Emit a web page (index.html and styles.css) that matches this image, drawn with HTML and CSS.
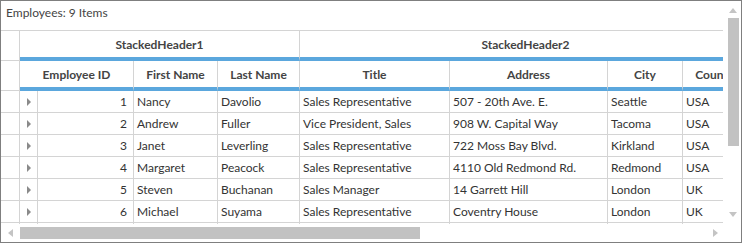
FILE: index.html
```html
<!doctype html>
<html>
<head>
  <meta charset="utf-8">
  <title>Employees</title>
  <link rel="stylesheet" href="styles.css">
</head>
<body>

  <div class="grid">
    <div class="main">
      <div class="caption">Employees: 9 Items</div>
      <div class="viewport">
        <div class="row stacked">
          <div class="cell rowhead"></div>
          <div class="cell hd w-sh1">StackedHeader1</div>
          <div class="cell hd w-sh2">StackedHeader2</div>
        </div>
        <div class="row headers">
          <div class="cell rowhead"></div>
          <div class="cell hd w-idx">Employee ID</div>
          <div class="cell hd w-first">First Name</div>
          <div class="cell hd w-last">Last Name</div>
          <div class="cell hd w-title">Title</div>
          <div class="cell hd w-addr">Address</div>
          <div class="cell hd w-city">City</div>
          <div class="cell hd w-country">Country</div>
        </div>

        <div class="row data">
          <div class="cell rowhead"></div>
          <div class="cell w-exp"><span class="expander"></span></div>
          <div class="cell num w-id">1</div>
          <div class="cell w-first">Nancy</div>
          <div class="cell w-last">Davolio</div>
          <div class="cell w-title">Sales Representative</div>
          <div class="cell w-addr">507 - 20th Ave. E.</div>
          <div class="cell w-city">Seattle</div>
          <div class="cell w-country">USA</div>
        </div>
        <div class="row data">
          <div class="cell rowhead"></div>
          <div class="cell w-exp"><span class="expander"></span></div>
          <div class="cell num w-id">2</div>
          <div class="cell w-first">Andrew</div>
          <div class="cell w-last">Fuller</div>
          <div class="cell w-title">Vice President, Sales</div>
          <div class="cell w-addr">908 W. Capital Way</div>
          <div class="cell w-city">Tacoma</div>
          <div class="cell w-country">USA</div>
        </div>
        <div class="row data">
          <div class="cell rowhead"></div>
          <div class="cell w-exp"><span class="expander"></span></div>
          <div class="cell num w-id">3</div>
          <div class="cell w-first">Janet</div>
          <div class="cell w-last">Leverling</div>
          <div class="cell w-title">Sales Representative</div>
          <div class="cell w-addr">722 Moss Bay Blvd.</div>
          <div class="cell w-city">Kirkland</div>
          <div class="cell w-country">USA</div>
        </div>
        <div class="row data">
          <div class="cell rowhead"></div>
          <div class="cell w-exp"><span class="expander"></span></div>
          <div class="cell num w-id">4</div>
          <div class="cell w-first">Margaret</div>
          <div class="cell w-last">Peacock</div>
          <div class="cell w-title">Sales Representative</div>
          <div class="cell w-addr">4110 Old Redmond Rd.</div>
          <div class="cell w-city">Redmond</div>
          <div class="cell w-country">USA</div>
        </div>
        <div class="row data">
          <div class="cell rowhead"></div>
          <div class="cell w-exp"><span class="expander"></span></div>
          <div class="cell num w-id">5</div>
          <div class="cell w-first">Steven</div>
          <div class="cell w-last">Buchanan</div>
          <div class="cell w-title">Sales Manager</div>
          <div class="cell w-addr">14 Garrett Hill</div>
          <div class="cell w-city">London</div>
          <div class="cell w-country">UK</div>
        </div>
        <div class="row data">
          <div class="cell rowhead"></div>
          <div class="cell w-exp"><span class="expander"></span></div>
          <div class="cell num w-id">6</div>
          <div class="cell w-first">Michael</div>
          <div class="cell w-last">Suyama</div>
          <div class="cell w-title">Sales Representative</div>
          <div class="cell w-addr">Coventry House</div>
          <div class="cell w-city">London</div>
          <div class="cell w-country">UK</div>
        </div>
        <!-- next row only peeks in under the last one -->
        <div class="row data">
          <div class="cell rowhead"></div>
          <div class="cell w-exp"></div>
          <div class="cell w-id"></div>
          <div class="cell w-first"></div>
          <div class="cell w-last"></div>
          <div class="cell w-title"></div>
          <div class="cell w-addr"></div>
          <div class="cell w-city"></div>
          <div class="cell w-country"></div>
        </div>
      </div>
    </div>

    <div class="vscroll">
      <span class="arrow up"></span>
      <div class="vthumb"></div>
      <span class="arrow down"></span>
    </div>

    <div class="hscroll">
      <span class="arrow left"></span>
      <div class="hthumb"></div>
      <span class="arrow right"></span>
    </div>
    <div class="corner"></div>
  </div>

</body>
</html>
```

FILE: styles.css
```css
body {
  margin: 0;
  background: #fff;
}

.grid {
  box-sizing: border-box;
  width: 742px;
  height: 243px;
  border: 1px solid #7f7f7f;
  display: grid;
  grid-template-columns: 722px 17px;
  grid-template-rows: 223px 17px;
  font-family: "Lato", "Liberation Sans", sans-serif;
  font-size: 12px;
  color: #333;
  background: #fff;
}

.main {
  overflow: hidden;
}

.caption {
  box-sizing: border-box;
  height: 30px;
  padding: 4px 0 0 5px;
  border-bottom: 1px solid #d4d4d4;
  color: #444;
}

.viewport {
  width: 722px;
  height: 193px;
  overflow: hidden;
}

.row {
  display: flex;
  width: max-content;
}

.cell {
  box-sizing: border-box;
  flex: none;
  display: flex;
  align-items: center;
  border-right: 1px solid #d4d4d4;
  border-bottom: 1px solid #d4d4d4;
  padding: 0 3px;
  white-space: nowrap;
  overflow: hidden;
}

.stacked .cell,
.headers .cell {
  height: 30px;
}

.hd {
  justify-content: center;
  font-weight: bold;
  color: #444;
  border-bottom: 4px solid #5ba7dd;
}

.rowhead {
  width: 19px;
}

.stacked .rowhead,
.headers .rowhead {
  border-bottom: 1px solid #d4d4d4;
}

.data .cell {
  height: 22px;
}

.num {
  justify-content: flex-end;
  padding-right: 6px;
}

.w-sh1 { width: 280px; }
.w-sh2 { width: 452px; }
.w-idx { width: 114px; }
.w-exp { width: 18px; padding: 0; justify-content: center; }
.w-id { width: 96px; }
.w-first { width: 84px; }
.w-last { width: 82px; }
.w-title { width: 150px; }
.w-addr { width: 158px; }
.w-city { width: 75px; }
.w-country { width: 69px; }

.expander {
  width: 0;
  height: 0;
  border-top: 4px solid transparent;
  border-bottom: 4px solid transparent;
  border-left: 4px solid #8a8a8a;
}

/* scrollbars */
.vscroll {
  grid-row: 1;
  grid-column: 2;
  display: flex;
  flex-direction: column;
  align-items: center;
  padding: 7px 0 0 3px;
}

.vthumb {
  width: 11px;
  height: 128px;
  margin-top: 5px;
  margin-bottom: 66px;
  background: #c2c2c2;
}

.hscroll {
  grid-row: 2;
  grid-column: 1;
  display: flex;
  align-items: center;
  padding-left: 7px;
}

.hthumb {
  width: 400px;
  height: 12px;
  margin-left: 7px;
  margin-right: 293px;
  background: #c2c2c2;
}

.arrow {
  width: 0;
  height: 0;
}

.arrow.up {
  border-left: 4px solid transparent;
  border-right: 4px solid transparent;
  border-bottom: 5px solid #c4c4c4;
}

.arrow.down {
  border-left: 4px solid transparent;
  border-right: 4px solid transparent;
  border-top: 5px solid #c4c4c4;
}

.arrow.left {
  border-top: 4px solid transparent;
  border-bottom: 4px solid transparent;
  border-right: 5px solid #c4c4c4;
}

.arrow.right {
  border-top: 4px solid transparent;
  border-bottom: 4px solid transparent;
  border-left: 5px solid #c4c4c4;
}
```
